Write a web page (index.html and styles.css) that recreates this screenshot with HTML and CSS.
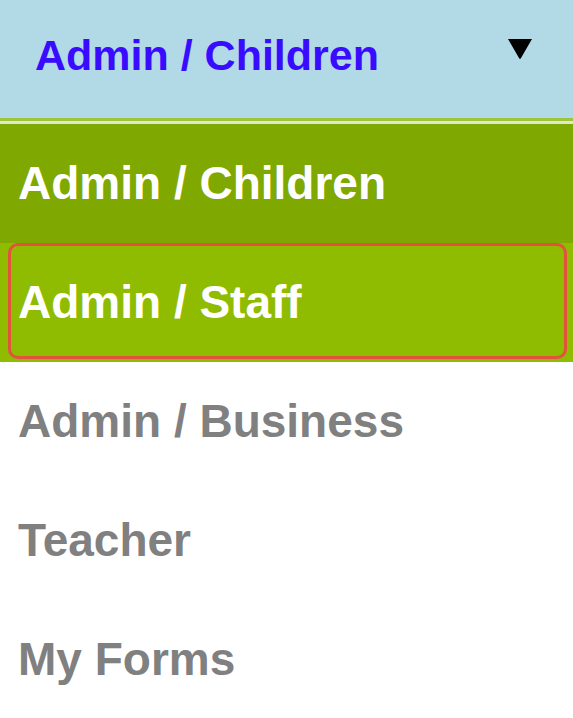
FILE: index.html
```html
<!DOCTYPE html>
<html>
<head>
    <meta name="viewport" content="width=device-width, initial-scale=1">
    <link rel="stylesheet" href="styles.css">
</head>

<body>

<div class="select">

    <div class="select-current">
        <span class="select-label">Admin / Children</span>
        <svg class="caret" width="26" height="22" viewBox="0 0 26 22">
            <path d="M1 1 L25 1 L14 20 Q13 22 12 20 Z" fill="#000"/>
        </svg>
    </div>

    <ul class="options">
        <li class="option selected">Admin / Children</li>
        <li class="option hover">Admin / Staff</li>
        <li class="option">Admin / Business</li>
        <li class="option">Teacher</li>
        <li class="option">My Forms</li>
    </ul>

</div>

</body>
</html>
```

FILE: styles.css
```css
body {
    margin: 0;
    background-color: #fff;
    font-family: "Liberation Sans", Arial, Helvetica, sans-serif;
    font-weight: bold;
}

.select-current {
    display: flex;
    justify-content: space-between;
    align-items: flex-start;
    height: 118px;
    padding: 0 40px 0 35px;
    background-color: #b1d9e6;
    border-bottom: 3px solid #9cc53a;
    box-shadow: 0 3px 0 #dfe7cf;
}

.select-label {
    color: #3a0cff;
    font-size: 43px;
    line-height: 110px;
}

.caret {
    margin-top: 38px;
}

.options {
    list-style: none;
    margin: 3px 0 0 0;
    padding: 0;
}

.option {
    position: relative;
    height: 119px;
    padding-left: 18px;
    font-size: 46px;
    line-height: 119px;
    color: #808080;
    white-space: nowrap;
}

.option.selected {
    background-color: #7fa800;
    color: #fff;
}

.option.hover {
    background-color: #8fbc00;
    color: #fff;
}

/* focus ring around the hovered item */
.option.hover::after {
    content: "";
    position: absolute;
    top: 0;
    left: 8px;
    right: 6px;
    bottom: 3px;
    border: 3px solid #e2523c;
    border-radius: 10px;
}
```
